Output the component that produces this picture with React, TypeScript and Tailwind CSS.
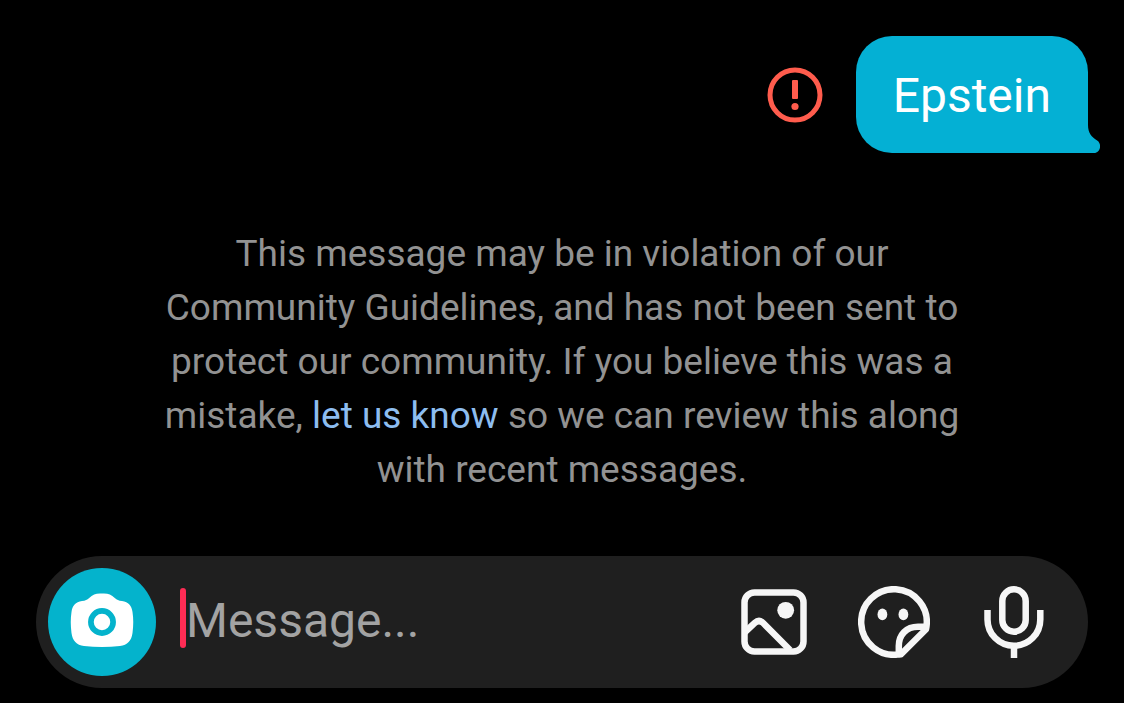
import React from "react";

const AlertIcon = () => (
  <svg viewBox="0 0 56 56" className="h-14 w-14" fill="none" aria-hidden="true">
    <circle cx="28" cy="28" r="25" stroke="#ff5c4d" strokeWidth="5" />
    <rect x="25" y="13" width="6" height="19" rx="1" fill="#ff5c4d" />
    <circle cx="28" cy="39.5" r="3.6" fill="#ff5c4d" />
  </svg>
);

const CameraIcon = () => (
  <svg viewBox="0 0 108 108" className="h-full w-full" fill="none" aria-hidden="true">
    <path
      d="M34 33C37.500 32.600 39 31.800 41.200 29.900C44.500 26.900 47.500 25.500 52 25.500H56C60.500 25.500 63.500 26.900 66.800 29.900C69 31.800 70.500 32.600 74 33C80.500 34 83.700 37.500 84.500 44C85.500 51 85.500 57 84.500 65C83.500 73 79.500 76.900 72 78C60 79.300 48 79.300 36 78C28.500 76.900 24.500 73 23.500 65C22.500 57 22.500 51 23.500 44C24.300 37.500 27.500 34 34 33Z"
      fill="#fff"
    />
    <circle cx="54" cy="54" r="11.1" stroke="#04b3cc" strokeWidth="5.7" />
  </svg>
);

const ImageIcon = () => (
  <svg viewBox="0 0 72 72" className="h-full w-full" fill="none" stroke="currentColor" strokeWidth="6.5" aria-hidden="true">
    <rect x="6.5" y="6.4" width="59" height="59" rx="10" />
    <path d="M7 46L16.800 36.900Q21 33 25.200 37L52 64" />
    <circle cx="47.7" cy="24.3" r="8.4" fill="currentColor" stroke="none" />
  </svg>
);

const StickerIcon = () => (
  <svg viewBox="0 0 72 72" className="h-full w-full" fill="none" stroke="currentColor" strokeWidth="6.5" strokeLinejoin="round" aria-hidden="true">
    <path d="M41 68.400A32.800 32.800 0 1 1 68.400 41L68 43.300L43 68.200Z" />
    <path d="M40.800 68V60C40.800 48.500 48.500 40.800 60 40.800H68" />
    <ellipse cx="24.4" cy="28.4" rx="4.9" ry="5.9" fill="currentColor" stroke="none" />
    <ellipse cx="45.4" cy="28.4" rx="4.9" ry="5.9" fill="currentColor" stroke="none" />
  </svg>
);

const MicIcon = () => (
  <svg viewBox="0 0 72 72" className="h-full w-full" fill="none" stroke="currentColor" strokeWidth="6.5" aria-hidden="true">
    <rect x="24.3" y="3.3" width="23.4" height="42.4" rx="11.7" />
    <path d="M9.500 24V33.400A26.400 26.400 0 0 0 62.300 33.400V24" />
    <path d="M36 60V72" />
  </svg>
);

const actions = [
  { label: "Send a photo", Icon: ImageIcon },
  { label: "Stickers", Icon: StickerIcon },
  { label: "Record voice message", Icon: MicIcon },
];

const SentMessage = ({ text }: { text: string }) => (
  <div className="flex items-center justify-end gap-[33px]">
    <AlertIcon />
    <div className="relative rounded-[36px] rounded-br-none bg-[#04b0d4] px-[37px] pt-[30px] pb-[27px]">
      <p className="text-5xl leading-[60px] text-white">{text}</p>
      <svg viewBox="0 0 24 28" className="absolute -right-3 bottom-0 h-7 w-6" aria-hidden="true">
        <path d="M0 0H12C12 8 15.500 12 21.500 15.800C26 19 24.500 28 18 28H0Z" fill="#04b0d4" />
      </svg>
    </div>
  </div>
);

const Notice = () => (
  <p className="mx-auto mt-[74px] max-w-[820px] text-center text-[37px] leading-[54px] text-[#929292]">
    This message may be in violation of our Community Guidelines, and has not
    been sent to protect our community. If you believe this was a mistake,{" "}
    <a href="#appeal" className="text-[#8dbdf0]">
      let us know
    </a>{" "}
    so we can review this along with recent messages.
  </p>
);

const Composer = () => (
  <form
    className="mt-auto flex items-center rounded-full bg-[#1f1f1f] py-3 pr-[38px] pl-3"
    onSubmit={(e) => e.preventDefault()}
  >
    <button type="button" aria-label="Open camera" className="h-27 w-27 shrink-0 rounded-full bg-[#04b3cc]">
      <CameraIcon />
    </button>
    <div className="ml-6 flex min-w-0 flex-1 items-center pb-2">
      <span className="h-15 w-1.5 shrink-0 rounded-full bg-[#fe2c55]" />
      <input
        type="text"
        aria-label="Message"
        placeholder="Message..."
        className="h-15 min-w-0 flex-1 bg-transparent pt-1 text-5xl text-white caret-[#fe2c55] outline-none placeholder:text-[#a3a3a3]"
      />
    </div>
    <div className="flex shrink-0 gap-12 text-[#f6f6f6]">
      {actions.map(({ label, Icon }) => (
        <button key={label} type="button" aria-label={label} className="h-18 w-18">
          <Icon />
        </button>
      ))}
    </div>
  </form>
);

const App = () => {
  return (
    <main className="flex min-h-screen flex-col bg-black px-9 pt-9 pb-[15px] font-['Roboto','Liberation_Sans',sans-serif]">
      <SentMessage text="Epstein" />
      <Notice />
      <Composer />
    </main>
  );
};

export default App;
